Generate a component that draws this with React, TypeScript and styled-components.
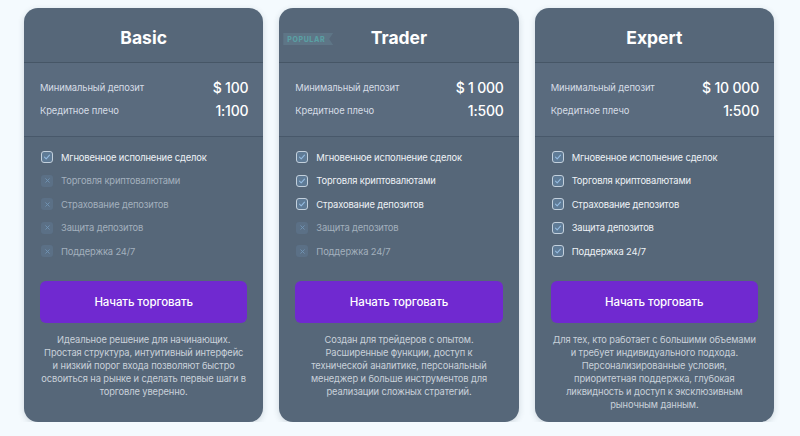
import React from "react";
import styled, { createGlobalStyle } from "styled-components";

const Global = createGlobalStyle`
  html, body { margin: 0; padding: 0; background: #f4fafe; }
  body { font-family: Inter, "Noto Sans", sans-serif; -webkit-font-smoothing: antialiased; }
  * { box-sizing: border-box; }
`;

const Page = styled.div`
  display: grid;
  grid-template-columns: repeat(3, 1fr);
  gap: 16px;
  padding: 8px 26px 0 24px;
  width: 800px;
`;

const Card = styled.div`
  position: relative;
  display: flex;
  flex-direction: column;
  background: #566779;
  border-radius: 14px;
  overflow: hidden;
  box-shadow: 0 2px 6px rgba(40, 60, 80, 0.18);
  padding-bottom: 11px;
`;

const Header = styled.div`
  position: relative;
  height: 55px;
  padding-top: 5px;
  display: flex;
  align-items: center;
  justify-content: center;
  border-bottom: 1px solid rgba(40, 55, 70, 0.35);
`;

const Title = styled.h2`
  margin: 0;
  font-size: 17.5px;
  font-weight: 700;
  color: #ffffff;
`;

const Badge = styled.span`
  position: absolute;
  left: 4px;
  top: 25px;
  height: 12px;
  padding: 0 8px 0 4px;
  display: flex;
  align-items: center;
  font-size: 7px;
  font-weight: 800;
  letter-spacing: 0.6px;
  color: #5a9fa3;
  background: #5e7586;
  clip-path: polygon(0 0, 100% 0, 92% 50%, 100% 100%, 0 100%);
`;

const Specs = styled.div`
  display: flex;
  flex-direction: column;
  gap: 5px;
  padding: 15px 15px 17px 16px;
  background: #5a6b7e;
  border-bottom: 1px solid rgba(40, 55, 70, 0.35);
`;

const SpecRow = styled.div`
  display: flex;
  justify-content: space-between;
  align-items: center;
  height: 18px;
`;

const SpecLabel = styled.span`
  font-size: 9.4px;
  letter-spacing: -0.1px;
  color: #d6dde6;
`;

const SpecValue = styled.span`
  font-size: 14px;
  font-weight: 500;
  letter-spacing: -0.2px;
  color: #ffffff;
`;

const Features = styled.ul`
  list-style: none;
  margin: 0;
  padding: 11px 16px 21px 17px;
  display: flex;
  flex-direction: column;
  gap: 5.5px;
`;

const Feature = styled.li<{ $on: boolean }>`
  display: flex;
  align-items: center;
  gap: 8px;
  height: 18px;
  font-size: 9.4px;
  letter-spacing: -0.15px;
  color: ${(p) => (p.$on ? "#eef2f6" : "#a3b0bd")};
`;

const Box = styled.span<{ $on: boolean }>`
  width: 12px;
  height: 12px;
  border-radius: 3px;
  flex: none;
  display: flex;
  align-items: center;
  justify-content: center;
  border: ${(p) => (p.$on ? "1.3px solid #c3d0dc" : "1px solid transparent")};
  background: ${(p) => (p.$on ? "#5f7b96" : "#5b7086")};
`;

const Button = styled.button`
  margin: 0 16px;
  height: 42px;
  flex: none;
  border: none;
  border-radius: 6px;
  background: #7029d0;
  color: #ffffff;
  font-family: inherit;
  font-size: 11.5px;
  font-weight: 500;
  letter-spacing: -0.1px;
  cursor: pointer;
`;

const Desc = styled.p`
  margin: 10px 0 0;
  text-align: center;
  white-space: nowrap;
  font-size: 9.3px;
  line-height: 13px;
  letter-spacing: -0.1px;
  color: #c9d1da;
`;

const Check = () => (
  <svg width="8" height="8" viewBox="0 0 8 8">
    <path d="M1.5 4.2 L3.2 5.8 L6.5 2.2" fill="none" stroke="#94bbe0" strokeWidth="1.1" strokeLinecap="round" strokeLinejoin="round" />
  </svg>
);

const Cross = () => (
  <svg width="7" height="7" viewBox="0 0 8 8">
    <path d="M2 2 L6 6 M6 2 L2 6" fill="none" stroke="#7396b6" strokeWidth="1" strokeLinecap="round" />
  </svg>
);

const featureNames = [
  "Мгновенное исполнение сделок",
  "Торговля криптовалютами",
  "Страхование депозитов",
  "Защита депозитов",
  "Поддержка 24/7",
];

type Plan = {
  name: string;
  deposit: string;
  leverage: string;
  active: number;
  popular?: boolean;
  desc: string[];
};

const plans: Plan[] = [
  {
    name: "Basic",
    deposit: "$ 100",
    leverage: "1:100",
    active: 1,
    desc: [
      "Идеальное решение для начинающих.",
      "Простая структура, интуитивный интерфейс",
      "и низкий порог входа позволяют быстро",
      "освоиться на рынке и сделать первые шаги в",
      "торговле уверенно.",
    ],
  },
  {
    name: "Trader",
    deposit: "$ 1 000",
    leverage: "1:500",
    active: 3,
    popular: true,
    desc: [
      "Создан для трейдеров с опытом.",
      "Расширенные функции, доступ к",
      "технической аналитике, персональный",
      "менеджер и больше инструментов для",
      "реализации сложных стратегий.",
    ],
  },
  {
    name: "Expert",
    deposit: "$ 10 000",
    leverage: "1:500",
    active: 5,
    desc: [
      "Для тех, кто работает с большими объемами",
      "и требует индивидуального подхода.",
      "Персонализированные условия,",
      "приоритетная поддержка, глубокая",
      "ликвидность и доступ к эксклюзивным",
      "рыночным данным.",
    ],
  },
];

export default function App() {
  return (
    <>
      <Global />
      <Page>
        {plans.map((p) => (
          <Card key={p.name}>
            <Header>
              {p.popular && <Badge>POPULAR</Badge>}
              <Title>{p.name}</Title>
            </Header>
            <Specs>
              <SpecRow>
                <SpecLabel>Минимальный депозит</SpecLabel>
                <SpecValue>{p.deposit}</SpecValue>
              </SpecRow>
              <SpecRow>
                <SpecLabel>Кредитное плечо</SpecLabel>
                <SpecValue>{p.leverage}</SpecValue>
              </SpecRow>
            </Specs>
            <Features>
              {featureNames.map((f, i) => {
                const on = i < p.active;
                return (
                  <Feature key={f} $on={on}>
                    <Box $on={on}>{on ? <Check /> : <Cross />}</Box>
                    {f}
                  </Feature>
                );
              })}
            </Features>
            <Button>Начать торговать</Button>
            <Desc>
              {p.desc.map((line, i) => (
                <React.Fragment key={i}>
                  {i > 0 && <br />}
                  {line}
                </React.Fragment>
              ))}
            </Desc>
          </Card>
        ))}
      </Page>
    </>
  );
}
